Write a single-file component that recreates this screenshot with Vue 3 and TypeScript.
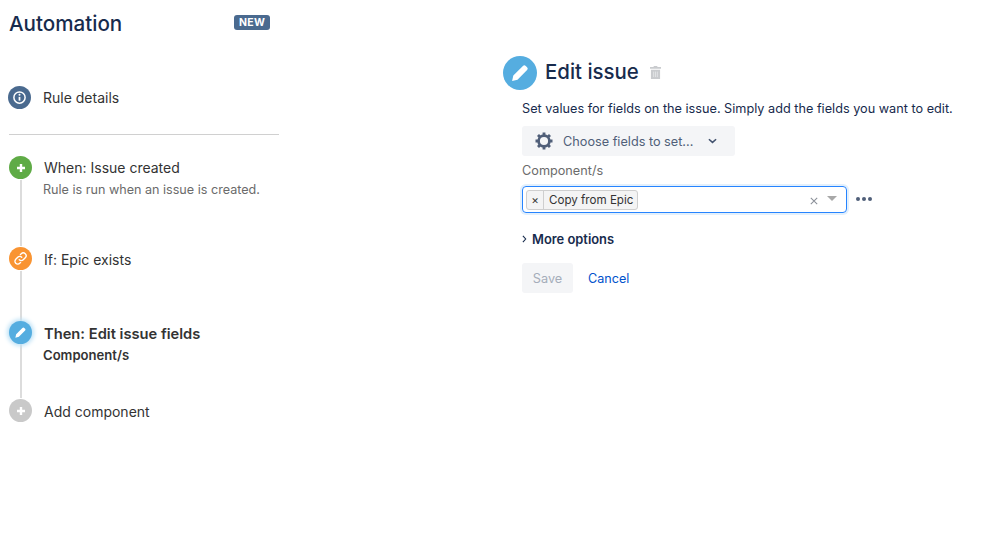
<script setup lang="ts">
// Static screen: no state is needed.
</script>

<template>
  <div class="page">
    <aside class="side">
      <header class="brand">
        <h1>Automation</h1>
        <span class="badge">NEW</span>
      </header>
      <div class="details">
        <span class="dot dot-info">
          <svg viewBox="0 0 24 24" width="15" height="15" fill="none" stroke="#fff">
            <circle cx="12" cy="12" r="9" stroke-width="2.4" />
            <path d="M12 11v6" stroke-width="2.8" />
            <circle cx="12" cy="7.6" r="1.6" fill="#fff" stroke="none" />
          </svg>
        </span>
        <span class="label">Rule details</span>
      </div>
      <hr class="rule" />
      <div class="timeline">
        <div class="step step-when">
          <span class="dot dot-green">
            <svg viewBox="0 0 12 12" width="12" height="12"><path d="M6 2v8M2 6h8" stroke="#fff" stroke-width="2.4" /></svg>
          </span>
          <div class="body">
            <div class="label">When: Issue created</div>
            <div class="sub">Rule is run when an issue is created.</div>
          </div>
        </div>
        <div class="step step-if">
          <span class="dot dot-orange">
            <svg viewBox="0 0 24 24" width="15" height="15" fill="none" stroke="#fff" stroke-width="2.2" stroke-linecap="round">
              <path d="M10 14a4.5 4.5 0 0 0 6.4 0l3.2-3.2a4.5 4.5 0 0 0-6.4-6.4L11.8 5.800" />
              <path d="M14 10a4.5 4.5 0 0 0-6.4 0l-3.200 3.200a4.500 4.500 0 0 0 6.400 6.400l1.400-1.400" />
            </svg>
          </span>
          <div class="body"><div class="label">If: Epic exists</div></div>
        </div>
        <div class="step step-then">
          <span class="dot dot-blue glow">
            <svg viewBox="0 0 24 24" width="13" height="13"><path d="M15.500 3.500a2.400 2.400 0 0 1 3.400 0l1.600 1.600a2.400 2.400 0 0 1 0 3.400L9 20l-6.500 1.500L4 15z" fill="#fff" /></svg>
          </span>
          <div class="body">
            <div class="label strong">Then: Edit issue fields</div>
            <div class="sub2">Component/s</div>
          </div>
        </div>
        <div class="step step-add">
          <span class="dot dot-grey">
            <svg viewBox="0 0 12 12" width="12" height="12"><path d="M6 2v8M2 6h8" stroke="#fff" stroke-width="2.4" /></svg>
          </span>
          <div class="body"><div class="label">Add component</div></div>
        </div>
      </div>
    </aside>

    <main class="panel">
      <div class="head">
        <span class="big-dot">
          <svg viewBox="0 0 24 24" width="20" height="20"><path d="M15.500 3.500a2.400 2.400 0 0 1 3.400 0l1.600 1.600a2.400 2.400 0 0 1 0 3.400L9 20l-6.500 1.500L4 15z" fill="#fff" /></svg>
        </span>
        <h2>Edit issue</h2>
        <svg class="trash" viewBox="0 0 12 14" width="11" height="13">
          <path d="M4 0h4v1h4v2H0V1h4zM1 4h10v10H1z" fill="#c9cbce" />
          <path d="M4 6v6M6 6v6M8 6v6" stroke="#e9eaec" stroke-width=".8" />
        </svg>
      </div>
      <div class="form">
        <p class="intro">Set values for fields on the issue. Simply add the fields you want to edit.</p>
        <button class="choose" type="button">
          <svg viewBox="0 0 24 24" width="20" height="20" fill="none">
            <circle cx="12" cy="12" r="6.500" stroke="#505f79" stroke-width="3.200" />
            <path d="M12 1.800v3.500M12 18.700v3.500M1.800 12h3.500M18.700 12h3.500M4.800 4.800l2.500 2.500M16.700 16.700l2.500 2.500M4.800 19.200l2.500-2.500M16.700 7.300l2.500-2.500" stroke="#505f79" stroke-width="3.400" />
          </svg>
          <span>Choose fields to set...</span>
          <svg class="chev" viewBox="0 0 10 6" width="9" height="6"><path d="M1 1l4 3.600L9 1" fill="none" stroke="#42526e" stroke-width="1.700" /></svg>
        </button>
        <label class="field-label">Component/s</label>
        <div class="field-row">
          <div class="select">
            <span class="tag"><span class="tag-x">×</span><span class="tag-text">Copy from Epic</span></span>
            <span class="clear">
              <svg viewBox="0 0 10 10" width="8" height="8"><path d="M1 1l8 8M9 1l-8 8" stroke="#8a8f98" stroke-width="1.300" /></svg>
            </span>
            <span class="caret"></span>
          </div>
          <span class="more"><i></i><i></i><i></i></span>
        </div>
        <div class="options">
          <svg viewBox="0 0 6 10" width="5" height="8"><path d="M1 1l3.500 4L1 9" fill="none" stroke="#172b4d" stroke-width="1.400" /></svg>
          <span>More options</span>
        </div>
        <div class="actions">
          <button class="save" type="button" disabled>Save</button>
          <a class="cancel">Cancel</a>
        </div>
      </div>
    </main>
  </div>
</template>

<style>
html, body { margin: 0; background: #fff; }
</style>

<style scoped>
.page {
  width: 998px;
  height: 560px;
  display: flex;
  overflow: hidden;
  font-family: Inter, "Liberation Sans", sans-serif;
  color: #333;
  background: #fff;
}
.side { width: 270px; margin-left: 9px; flex: none; }
.brand {
  height: 46px;
  display: flex;
  align-items: center;
  justify-content: space-between;
}
h1 { margin: 0; font-size: 20.600px; font-weight: 500; color: #172b4d; }
.badge {
  background: #4a6a8f;
  color: #fff;
  font-size: 10.500px;
  font-weight: 700;
  line-height: 15px;
  padding: 0 5px;
  border-radius: 3px;
  margin: -2px 9px 0 0;
  letter-spacing: .2px;
}
.details {
  margin-top: 38px;
  height: 26px;
  display: flex;
  align-items: center;
  gap: 12px;
}
.details .dot { margin-left: -1px; }
.details .label { padding-top: 2px; }
.dot {
  width: 23px;
  height: 23px;
  border-radius: 50%;
  display: flex;
  align-items: center;
  justify-content: center;
  flex: none;
  position: relative;
  z-index: 1;
  box-shadow: 0 0 0 1px #fff;
}
.dot-info { background: #4a6a8f; }
.dot-green { background: #5fab46; }
.dot-orange { background: #f99432; }
.dot-blue { background: #55ade0; }
.dot-grey { background: #c9c9c9; }
.glow { box-shadow: 0 0 4px 2px #bfe2f6; }
.label { font-size: 14px; line-height: 20px; color: #333; }
.strong { font-size: 14.700px; font-weight: 600; }
.sub { font-size: 12.600px; line-height: 18px; color: #6b6b6b; margin: 3px 0 0 -1px; }
.sub2 { font-size: 13.100px; font-weight: 600; line-height: 18px; color: #333; margin: 2px 0 0 -1px; }
.rule { border: 0; border-top: 1px solid #d0d0d0; margin: 24px 0 0; }
.timeline { position: relative; margin-top: 21px; }
.timeline::before {
  content: "";
  position: absolute;
  left: 11px;
  top: 12px;
  height: 243px;
  width: 2px;
  background: #dcdcdc;
}
.step { display: flex; gap: 12px; align-items: flex-start; }
.step-when { height: 91px; }
.step-if { height: 74px; }
.step-then { height: 78px; }
.step-add { height: 23px; }
.body { padding-top: 2px; }
.step-if .body,
.step-then .body,
.step-add .body { padding-top: 3px; }
.panel { margin-left: 224px; padding-top: 55px; flex: 1; }
.head { display: flex; align-items: center; height: 35px; }
.big-dot {
  width: 34px;
  height: 34px;
  border-radius: 50%;
  background: #55ade0;
  display: flex;
  align-items: center;
  justify-content: center;
}
h2 { margin: -3px 0 0 8px; font-size: 20.400px; font-weight: 500; color: #172b4d; }
.trash { margin-left: 11px; }
.form { padding-left: 19px; }
.intro { margin: 10px 0 0; font-size: 12.700px; line-height: 18px; color: #172b4d; white-space: nowrap; }
.choose {
  margin-top: 8px;
  width: 213px;
  height: 30px;
  border: 0;
  border-radius: 3px;
  background: #f4f5f7;
  display: flex;
  align-items: center;
  padding: 0 0 0 12px;
  font: inherit;
  font-size: 12.700px;
  color: #505f79;
}
.choose span { margin-left: 9px; }
.chev { margin-left: 15px; }
.field-label { display: block; margin-top: 6px; font-size: 12.700px; line-height: 18px; color: #6b6b6b; }
.field-row { display: flex; align-items: center; margin-top: 6px; }
.select {
  width: 325px;
  height: 27px;
  box-sizing: border-box;
  border: 1px solid #2684ff;
  border-radius: 4px;
  box-shadow: 0 0 0 2px #e3f0fc;
  display: flex;
  align-items: center;
  padding-left: 3px;
}
.tag {
  display: flex;
  height: 20px;
  box-sizing: border-box;
  border: 1px solid #cfcfcf;
  border-radius: 3px;
  background: #f4f4f4;
  font-size: 11.600px;
  color: #333;
  align-items: stretch;
}
.tag-x { width: 16px; text-align: center; line-height: 18px; border-right: 1px solid #cfcfcf; }
.tag-text { padding: 0 4px 0 5px; line-height: 18px; }
.clear { margin-left: auto; display: flex; padding-top: 3px; }
.caret {
  margin: -3px 9px 0 9px;
  border-left: 5px solid transparent;
  border-right: 5px solid transparent;
  border-top: 5px solid #a8a8a8;
}
.more { display: flex; gap: 2px; margin-left: 9px; margin-top: -1px; }
.more i { width: 4px; height: 4px; border-radius: 50%; background: #505f79; }
.options {
  margin-top: 18px;
  display: flex;
  align-items: center;
  gap: 5px;
  font-size: 12.900px;
  line-height: 18px;
  font-weight: 600;
  color: #172b4d;
}
.options svg { margin-top: -2px; }
.actions { margin-top: 14px; display: flex; align-items: center; }
.save {
  width: 51px;
  height: 30px;
  border: 0;
  border-radius: 3px;
  background: #f4f5f7;
  color: #a5adba;
  font: inherit;
  font-size: 12.700px;
}
.cancel { margin-left: 15px; font-size: 12.600px; color: #0052cc; }
</style>
